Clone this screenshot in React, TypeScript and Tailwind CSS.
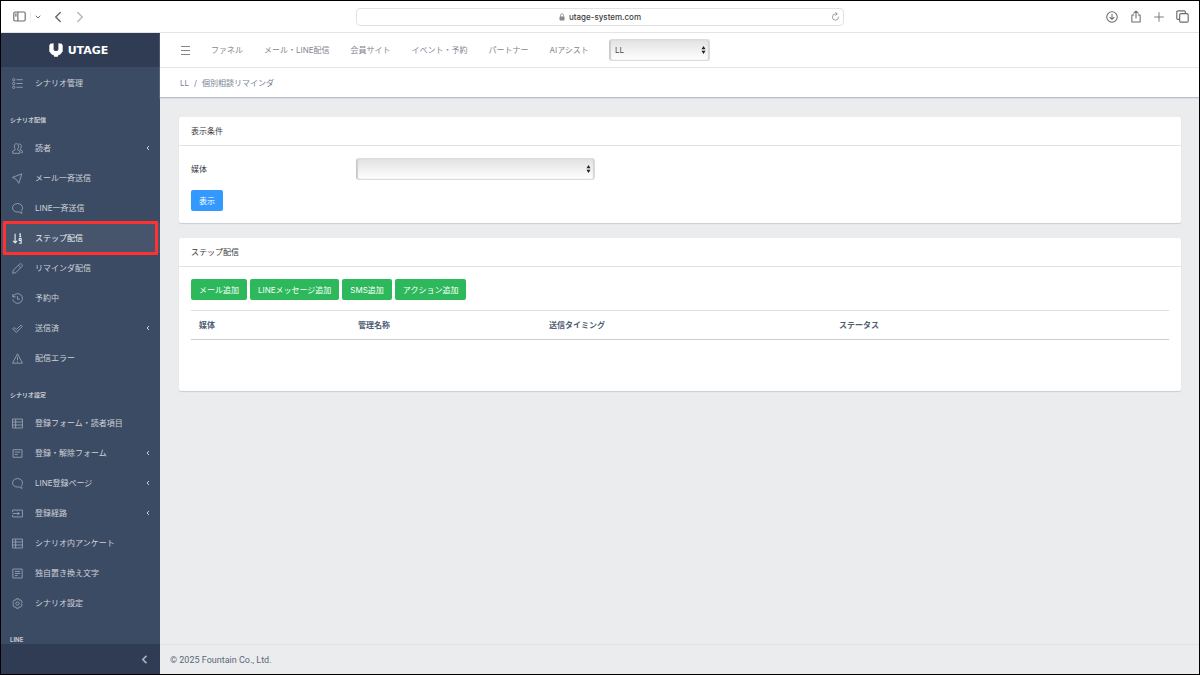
import React, { useState } from 'react';

type IconName =
  | 'list'
  | 'people'
  | 'send'
  | 'chat'
  | 'sort'
  | 'pencil'
  | 'history'
  | 'check'
  | 'warning'
  | 'table'
  | 'form'
  | 'input'
  | 'note'
  | 'gear';

type NavItem = { label: string; icon: IconName; group?: boolean };
type NavSection = { title?: string; items: NavItem[] };

const sections: NavSection[] = [
  { items: [{ label: 'シナリオ管理', icon: 'list' }] },
  {
    title: 'シナリオ配信',
    items: [
      { label: '読者', icon: 'people', group: true },
      { label: 'メール一斉送信', icon: 'send' },
      { label: 'LINE一斉送信', icon: 'chat' },
      { label: 'ステップ配信', icon: 'sort' },
      { label: 'リマインダ配信', icon: 'pencil' },
      { label: '予約中', icon: 'history' },
      { label: '送信済', icon: 'check', group: true },
      { label: '配信エラー', icon: 'warning' },
    ],
  },
  {
    title: 'シナリオ設定',
    items: [
      { label: '登録フォーム・読者項目', icon: 'table' },
      { label: '登録・解除フォーム', icon: 'form', group: true },
      { label: 'LINE登録ページ', icon: 'chat', group: true },
      { label: '登録経路', icon: 'input', group: true },
      { label: 'シナリオ内アンケート', icon: 'table' },
      { label: '独自置き換え文字', icon: 'note' },
      { label: 'シナリオ設定', icon: 'gear' },
    ],
  },
  { title: 'LINE', items: [] },
];

const topLinks = ['ファネル', 'メール・LINE配信', '会員サイト', 'イベント・予約', 'パートナー', 'AIアシスト'];
const addButtons = ['メール追加', 'LINEメッセージ追加', 'SMS追加', 'アクション追加'];

const iconShapes: Record<IconName, React.ReactNode> = {
  list: (
    <>
      <circle cx="2.500" cy="2.500" r="1.700" />
      <circle cx="2.500" cy="8" r="1.700" />
      <circle cx="2.500" cy="13.500" r="1.700" />
      <path d="M6.500 2.500h9M6.500 8h9M6.500 13.500h9" />
    </>
  ),
  people: (
    <>
      <path d="M6.500 1C4.600 1 3.500 2.300 3.500 4.200V6.500L4.500 8.500V10L1 11.800V15H11.500V11.800L8.300 10V8.500L9.400 6.500V4.200C9.400 2.300 8.300 1 6.500 1Z" />
      <path d="M10 1.500C12.200 1.200 13.400 2.500 13.400 4.300V6.500L12.300 8.500V10L15.500 11.800V14H13.500" />
    </>
  ),
  send: <path d="M14.300 1.200L.8 6.400L6.300 9.400L9.900 15L14.300 1.200Z" />,
  chat: <path d="M12.800 12C14.300 10.700 15.300 9 15.300 7C15.300 3.500 12.100 .8 8.100 .8S.8 3.500.8 7S4.100 13.200 8.100 13.200C9 13.200 9.700 13.100 10.500 12.900L14.300 15.300V12.500" />,
  sort: (
    <>
      <path d="M4.500 1V14.500M1.500 11.500L4.500 14.500L7.500 11.500" strokeWidth="1.600" />
      <path d="M10.500 2L12 1V5.500M10.500 5.500H13.500M10.500 8H13.300V11H10.500V8M13.300 11V14.800H10.500" strokeWidth="1.600" />
    </>
  ),
  pencil: <path d="M1 15L2 10.500L10.800 1.700C11.700.8 13 .8 13.900 1.700L14.300 2.100C15.200 3 15.200 4.300 14.300 5.200L5.500 14L1 15ZM9.300 3.200L12.800 6.700" />,
  history: (
    <>
      <path d="M1.500 5.500C2.600 2.800 5.200 1 8.200 1C12.100 1 15.200 4.100 15.200 8S12.100 15 8.200 15C4.700 15 1.800 12.500 1.200 9.200" />
      <path d="M1.200 1.500V5.700H5.400M8 4.500V9H11.500" />
    </>
  ),
  check: <path d="M1 8.600L3 6.600L6.300 9.700L13 3L15 5L6.300 13.700L1 8.600Z" />,
  warning: <path d="M8 1.200L15.300 14.800H.7L8 1.200ZM8 5.500V10.500M8 12V13.300" />,
  table: <path d="M.8 1.500H15.200V14.500H.8V1.500ZM.8 5.800H15.200M.8 10.200H15.200M5.300 1.500V14.500" />,
  form: <path d="M1.500 2.500H14.500V13.500H1.500V2.500ZM4 6H12M4 9.500H8.500" />,
  input: <path d="M1 6V3H15.200V13H1V10M1 8H10.500M8 5.500L10.500 8L8 10.500" />,
  note: <path d="M1.200 1.500H14.800V14.500H1.200V1.500ZM4 5H12M4 8H12M4 11H8.500" />,
  gear: (
    <>
      <path d="M6.500 1H9.500L10.200 3L12.800 2.800L14.800 6L13.600 8L14.800 10.200L12.800 13.200L10.200 13L9.500 15H6.500L5.800 13L3.200 13.200L1.200 10.200L2.400 8L1.200 6L3.200 2.800L5.800 3L6.500 1Z" />
      <circle cx="8" cy="8" r="2.400" />
    </>
  ),
};

function NavIcon({ name }: { name: IconName }) {
  return (
    <svg viewBox="0 0 16 16" className="h-[11px] w-[11px] shrink-0" fill="none" stroke="currentColor" strokeWidth="1.100" strokeLinejoin="round" aria-hidden="true">
      {iconShapes[name]}
    </svg>
  );
}

function StrokeIcon({ d, className }: { d: string; className: string }) {
  return (
    <svg viewBox="0 0 16 16" className={className} fill="none" stroke="currentColor" strokeWidth="1.400" strokeLinecap="round" strokeLinejoin="round" aria-hidden="true">
      <path d={d} />
    </svg>
  );
}

function BrowserBar() {
  return (
    <div className="grid h-8 shrink-0 grid-cols-[1fr_488px_1fr] items-center border-b border-[#e4e4e4] bg-white text-[#6b6b6b]">
      <div className="flex items-center pl-3">
        <button aria-label="サイドバー">
          <StrokeIcon className="h-[13px] w-[13px]" d="M2.500 2.500H13.500Q15 2.500 15 4V12Q15 13.500 13.500 13.500H2.500Q1 13.500 1 12V4Q1 2.500 2.500 2.500ZM6 2.500V13.500M3 5H4M3 7.200H4" />
        </button>
        <span className="ml-1 h-3 border-l border-[#f0f0f0]" />
        <button aria-label="タブグループ" className="ml-1">
          <svg viewBox="0 0 6 6" className="h-[6px] w-[6px]" fill="none" stroke="currentColor" strokeLinecap="round" strokeLinejoin="round" aria-hidden="true">
            <path d="M1 2L3 4L5 2" />
          </svg>
        </button>
        <button aria-label="戻る" className="ml-[11px]">
          <StrokeIcon className="h-3 w-3 stroke-2" d="M11 2L5 8L11 14" />
        </button>
        <button aria-label="進む" className="ml-[10px] text-[#b8b8b8]">
          <StrokeIcon className="h-3 w-3 stroke-2" d="M5 2L11 8L5 14" />
        </button>
      </div>
      <div className="relative flex h-[18px] items-center justify-center gap-1 rounded border border-[#e2e2e2] text-[#3c3c3c]">
        <svg viewBox="0 0 12 16" className="h-2 w-[6px] text-[#8a8a8a]" fill="currentColor" aria-hidden="true">
          <rect x="1" y="7" width="10" height="8" rx="1.500" />
          <path d="M3 8V4.500a3 3 0 0 1 6 0V8" fill="none" stroke="currentColor" strokeWidth="1.600" />
        </svg>
        <span className="text-[8px] font-medium">utage-system.com</span>
        <button aria-label="再読み込み" className="absolute right-[3px] text-[#8a8a8a]">
          <StrokeIcon className="h-[9px] w-[9px]" d="M8 .8L11 3.500L8 6M11 3.500H8A5.500 5.500 0 1 0 13.500 9" />
        </button>
      </div>
      <div className="flex items-center justify-end gap-3 pr-[10px]">
        <button aria-label="ダウンロード">
          <StrokeIcon className="h-3 w-3" d="M8 1A7 7 0 1 0 8 15A7 7 0 1 0 8 1M8 4.500V11M5.200 8.500L8 11.200L10.800 8.500" />
        </button>
        <button aria-label="共有">
          <StrokeIcon className="h-[13px] w-3" d="M5 6H2.500V15.200H13.500V6H11M8 10V.8M5 3.500L8 .8L11 3.500" />
        </button>
        <button aria-label="新規タブ">
          <StrokeIcon className="h-[10px] w-[10px]" d="M8 1V15M1 8H15" />
        </button>
        <button aria-label="タブ一覧">
          <StrokeIcon className="h-[13px] w-[13px]" d="M4 11.500H2.500Q1 11.500 1 10V2.500Q1 1 2.500 1H10Q11.500 1 11.500 2.500V4M6 4.500H13.500Q15 4.500 15 6V13.500Q15 15 13.500 15H6Q4.500 15 4.500 13.500V6Q4.500 4.500 6 4.500Z" />
        </button>
      </div>
    </div>
  );
}

function Sidebar() {
  const [active, setActive] = useState('ステップ配信');

  return (
    <aside className="flex w-[159px] shrink-0 flex-col bg-[#3c4b64] text-[#ced2d8]">
      {/* Brand */}
      <a href="#" className="flex h-[34px] shrink-0 items-center justify-center gap-[5px] bg-[#303c54] pr-1 text-white">
        <svg viewBox="0 0 14 14" className="h-[14px] w-[14px]" fill="currentColor" aria-hidden="true">
          <path d="M1.200 .8L4.600 .3V6.600L5.800 8H8.200L9.400 6.600V.3L12.800 .8L13.700 2.500V8.500L11 11.800H9.600L8.800 13.800H5.200L4.400 11.800H3L.3 8.500V2.500Z" />
        </svg>
        <span className="font-['DejaVu_Sans',sans-serif] text-[11px] leading-none font-bold">UTAGE</span>
      </a>

      {/* Menu */}
      <nav className="min-h-0 flex-1 overflow-hidden pt-px">
        {sections.map((section, i) => (
          <div key={i}>
            {section.title && (
              <h2 className="flex h-[35px] items-center pt-2 pl-[9px] text-[6px] font-bold text-[#c4c9d1]">{section.title}</h2>
            )}
            <ul>
              {section.items.map((item) => {
                const isActive = item.label === active;
                return (
                  <li key={item.label} className="relative">
                    <a
                      href="#"
                      onClick={() => setActive(item.label)}
                      className={`flex h-[30px] items-center pr-[9px] pl-[11px] ${isActive ? 'bg-[#46546c] text-[#eceef1]' : ''}`}
                    >
                      <span className={isActive ? 'text-[#eceef1]' : 'text-[#a8b0bc]'}>
                        <NavIcon name={item.icon} />
                      </span>
                      <span className="ml-3 flex-1">{item.label}</span>
                      {item.group && (
                        <svg viewBox="0 0 6 6" className="h-[6px] w-[6px]" fill="none" stroke="currentColor" aria-hidden="true">
                          <path d="M4 1L2 3L4 5" />
                        </svg>
                      )}
                    </a>
                    {isActive && <span className="pointer-events-none absolute inset-x-[2px] -inset-y-[2px] z-10 border-[3px] border-[#ff3131]" />}
                  </li>
                );
              })}
            </ul>
          </div>
        ))}
      </nav>

      <button aria-label="メニューを閉じる" className="flex h-[30px] shrink-0 items-center justify-end bg-[#303c54] pr-[11px] text-[#acb1bb]">
        <svg viewBox="0 0 16 16" className="h-[9px] w-[9px]" fill="none" stroke="currentColor" strokeWidth="3" aria-hidden="true">
          <path d="M11.500 1.500L5 8L11.500 14.500" />
        </svg>
      </button>
    </aside>
  );
}

function Select({ id, label, options, className }: { id: string; label?: string; options: string[]; className: string }) {
  return (
    <div className={`relative ${className}`}>
      <select
        id={id}
        aria-label={label}
        className="h-[22px] w-full appearance-none rounded-[3px] border border-[#dcdcdc] border-l-[#c8c8c8] bg-linear-to-b from-[#e2e2e2] to-white px-[5px] text-[8px] text-[#4a4a4a] shadow-[inset_1px_0_1px_#cfcfcf,inset_-1px_0_1px_#d4d4d4]"
      >
        {options.map((o) => (
          <option key={o}>{o}</option>
        ))}
      </select>
      <svg viewBox="0 0 8 14" className="pointer-events-none absolute top-[7px] right-[4px] h-2 w-[5px]" fill="#222" aria-hidden="true">
        <path d="M4 0L7.500 5.800H.5ZM4 14L.5 8.200H7.500Z" />
      </svg>
    </div>
  );
}

function Card({ title, children }: { title: string; children: React.ReactNode }) {
  return (
    <section className="rounded-[2px] bg-white shadow-[0_1px_1px_#c9cdd5]">
      <h2 className="flex h-[29px] items-center border-b border-[#e0e2e6] px-3 text-[#3a3a3c]">{title}</h2>
      {children}
    </section>
  );
}

export default function App() {
  return (
    <div className="flex h-screen flex-col overflow-hidden border border-black bg-[#ebecee] font-[Inter,'Noto_Sans_CJK_JP',sans-serif] text-[8px] leading-3">
      <BrowserBar />
      <div className="flex min-h-0 flex-1">
        <Sidebar />
        <div className="flex min-w-0 flex-1 flex-col">
          {/* Header */}
          <header className="shrink-0 border-b border-[#b9becb] bg-white shadow-[0_1px_1px_#dcdee3]">
            <div className="flex h-[35px] items-center border-b border-[#e4e5e8] pl-[21px] text-[#85858f]">
              <button aria-label="メニュー">
                <svg viewBox="0 0 9 9" className="h-[9px] w-[9px]" stroke="currentColor" aria-hidden="true">
                  <path d="M0 .5H9M0 4.500H9M0 8.500H9" />
                </svg>
              </button>
              <nav className="ml-[21px] flex gap-[21px]">
                {topLinks.map((l) => (
                  <a key={l} href="#">{l}</a>
                ))}
              </nav>
              <Select id="account" label="アカウント" options={['LL']} className="ml-5 w-[101px]" />
            </div>
            <nav className="flex h-[29px] items-center gap-[5px] px-5 text-[#768192]">
              <a href="#">LL</a>
              <span>/</span>
              <span>個別相談リマインダ</span>
            </nav>
          </header>

          {/* Content */}
          <main className="flex min-h-0 flex-1 flex-col gap-[15px] px-[18px] pt-[19px] pl-[19px]">
            <Card title="表示条件">
              <form className="px-3 pt-3 pb-3" onSubmit={(e) => e.preventDefault()}>
                <div className="flex items-center">
                  <label htmlFor="media" className="w-[165px] text-[#3a3a3c]">媒体</label>
                  <Select id="media" options={['']} className="w-[239px]" />
                </div>
                <button className="mt-[10px] h-[21px] rounded-[2px] bg-[#3399ff] px-2 text-white">表示</button>
              </form>
            </Card>

            <Card title="ステップ配信">
              <div className="px-3 pt-3 pb-[51px]">
                <div className="flex gap-[3px]">
                  {addButtons.map((b) => (
                    <button key={b} className="h-[21px] rounded-[2px] bg-[#2eb85c] px-2 text-white">{b}</button>
                  ))}
                </div>
                <table className="mt-[10px] w-full table-fixed border-t border-b border-t-[#dcdfe4] border-b-[#c8ccd6] text-left text-[#4f5d73]">
                  <thead>
                    <tr className="h-[29px]">
                      <th className="w-[159px] pl-2 font-bold">媒体</th>
                      <th className="w-[191px] pl-2 font-bold">管理名称</th>
                      <th className="w-[290px] pl-2 font-bold">送信タイミング</th>
                      <th className="pl-2 font-bold">ステータス</th>
                    </tr>
                  </thead>
                </table>
              </div>
            </Card>
          </main>

          <footer className="flex h-[30px] shrink-0 items-center border-t border-[#dfe1e5] px-[10px] font-[Roboto,sans-serif] text-[9px] text-[#5c6779]">
            © 2025 Fountain Co., Ltd.
          </footer>
        </div>
      </div>
    </div>
  );
}
